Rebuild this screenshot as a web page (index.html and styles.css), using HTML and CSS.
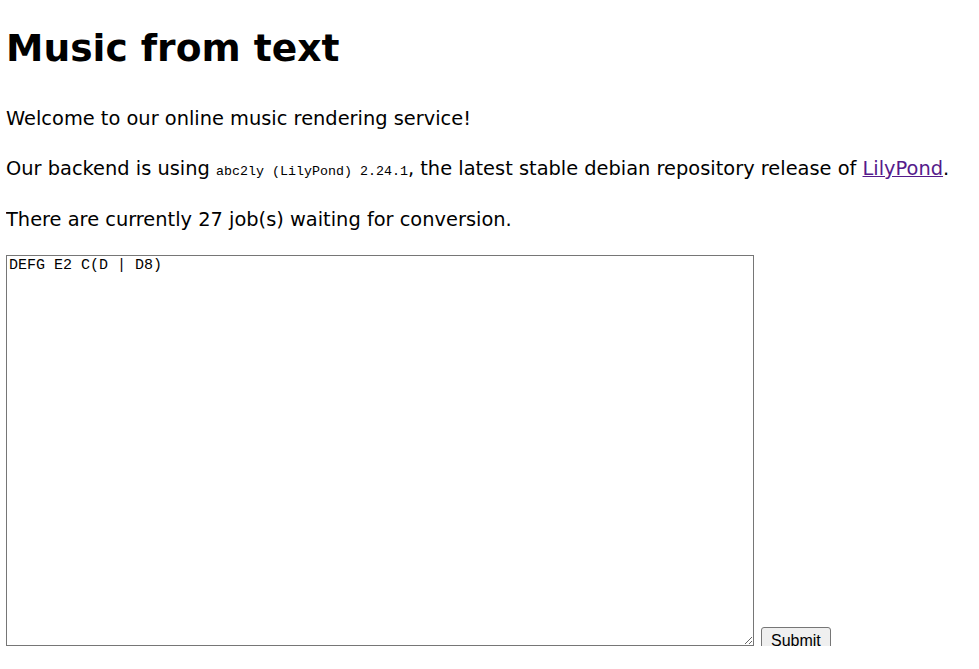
FILE: index.html
```html
<!DOCTYPE html>
<html>
<head>
<meta charset="utf-8">
<title>Music from text</title>
<link rel="stylesheet" href="styles.css">
</head>
<body>
<h1 class="title">Music from text</h1>
<p class="text">Welcome to our online music rendering service!</p>
<p class="text">Our backend is using <code class="code">abc2ly (LilyPond) 2.24.1</code>, the latest stable debian repository release of <a class="link" href="#">LilyPond</a>.</p>
<p class="text">There are currently 27 job(s) waiting for conversion.</p>
<form class="form">
<textarea class="input">DEFG E2 C(D | D8)</textarea>
<button class="submit" type="button">Submit</button>
</form>
</body>
</html>
```
FILE: styles.css
```css
body {
  margin: 8px 6px;
  font-family: "DejaVu Sans", sans-serif;
  font-size: 19.4px;
  line-height: 30px;
  color: #000;
  background: #fff;
}
.title {
  font-size: 37.6px;
  margin: 15px 0 31px;
  line-height: 50px;
}
.text {
  margin: 20px 0;
  white-space: nowrap;
}
.text:last-of-type {
  margin-top: 21px;
}
.code {
  font-family: "Liberation Mono", monospace;
  font-size: 13.33px;
  line-height: 1;
}
.link {
  color: #551a8b;
}
.form {
  display: flex;
  align-items: flex-end;
  gap: 7px;
}
.input {
  width: 742px;
  height: 385px;
  margin: 0;
  padding: 2px;
  border: 1px solid #767676;
  font-family: "Liberation Mono", monospace;
  font-size: 15px;
  line-height: 1.1;
  resize: both;
}
.submit {
  font-family: "Liberation Sans", Arial, sans-serif;
  font-size: 16px;
  line-height: 19px;
  height: 27px;
  padding: 3px 9px;
  border: 1px solid #767676;
  border-radius: 3px;
  background: #efefef;
  color: #000;
  margin-bottom: -8px;
}
```
